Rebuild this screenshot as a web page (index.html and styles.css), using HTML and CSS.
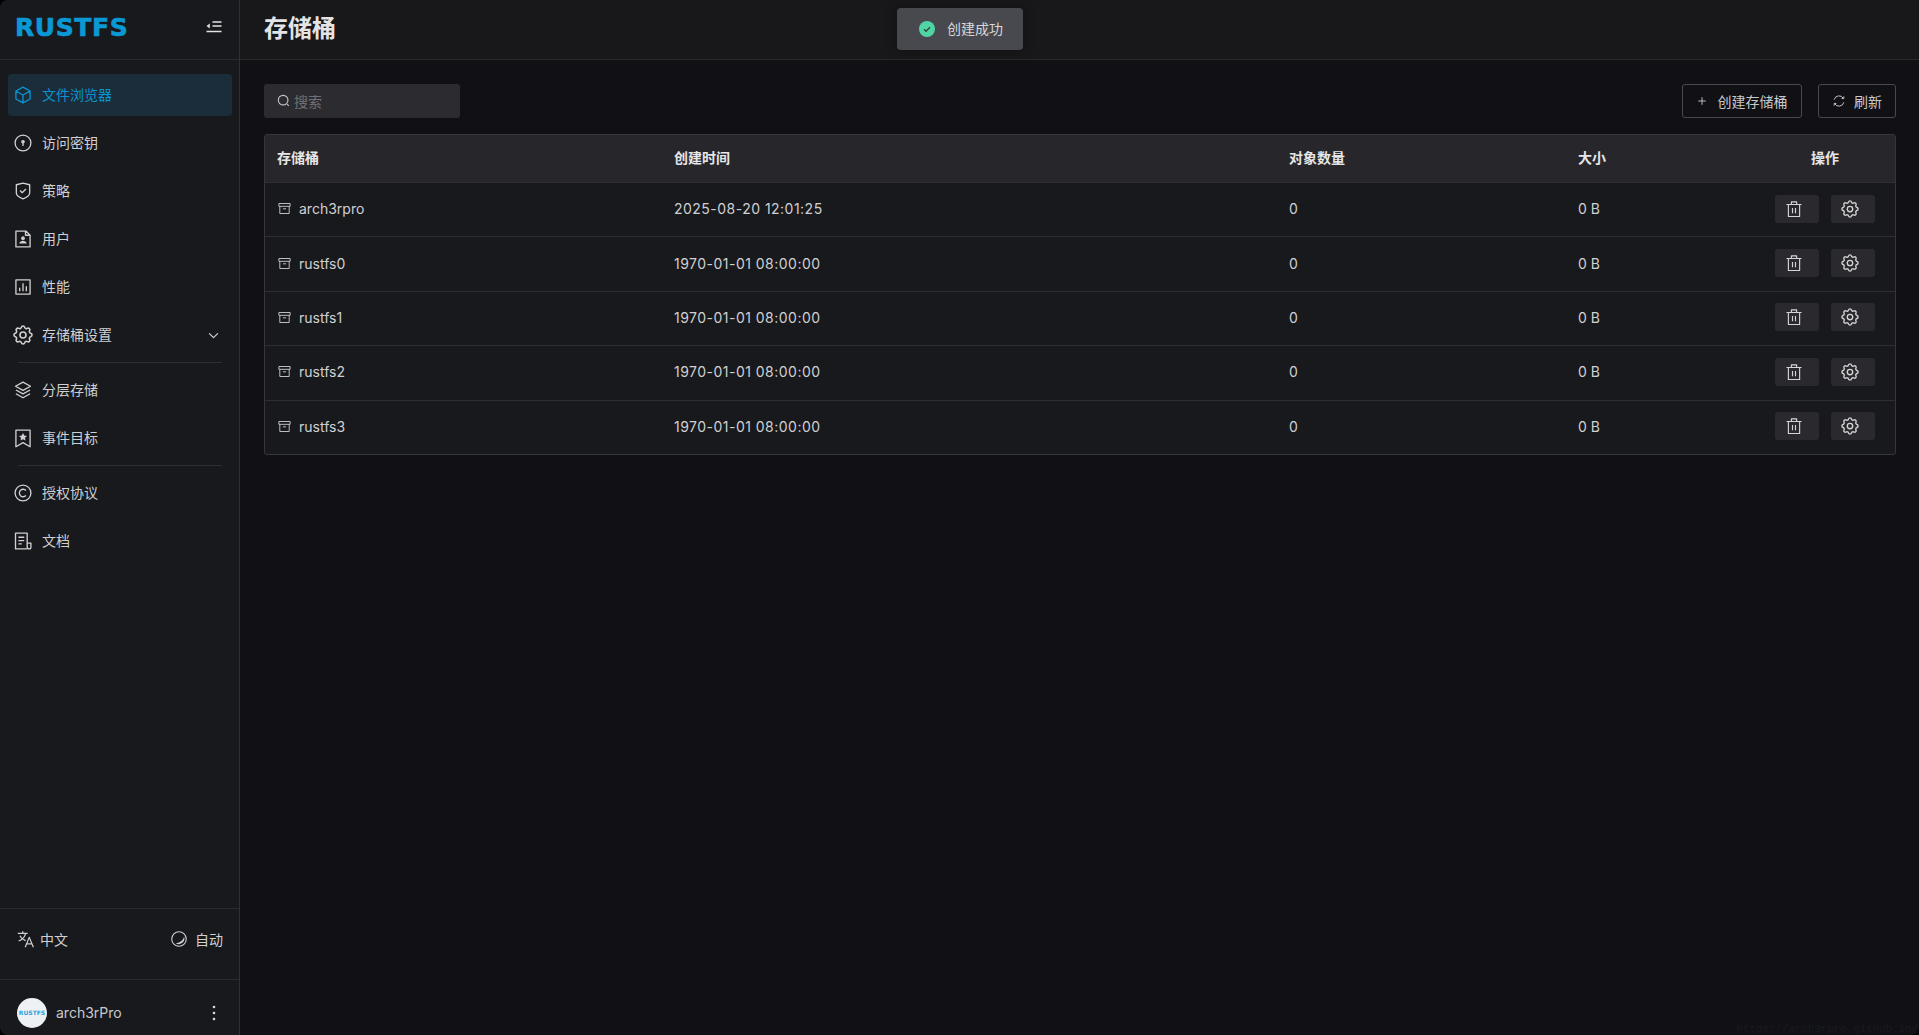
FILE: index.html
```html
<!DOCTYPE html>
<html lang="zh">
<head>
<meta charset="utf-8">
<title>RustFS</title>
<link rel="stylesheet" href="styles.css">
</head>
<body>
<svg class="defs" width="0" height="0" aria-hidden="true">
  <symbol id="i-box" viewBox="0 0 24 24"><path d="M12 2.500 20.500 7.200v9.600L12 21.500l-8.500-4.700V7.200zM4 7.500l8 4.500 8-4.500M12 12v9"/></symbol>
  <symbol id="i-key" viewBox="0 0 24 24"><circle cx="12" cy="12" r="9.500"/><circle class="fill" cx="12" cy="10.500" r="2.200"/><path d="M12 11v4.500"/></symbol>
  <symbol id="i-shield" viewBox="0 0 24 24"><path d="M12 2.500 20 4.500v10c0 2.500-4 5.500-8 7-4-1.500-8-4.500-8-7v-10zM8.500 11.500l2.500 2.500 4.500-4.500"/></symbol>
  <symbol id="i-user" viewBox="0 0 24 24"><path d="M3.500 2.500h12l5 5v14h-17zM15 2.500v5h5.500"/><circle class="fill" cx="12" cy="11" r="2.200"/><path class="fill" d="M7.500 17.500c.5-2.500 2.500-3.500 4.500-3.500s4 1 4.500 3.500z"/></symbol>
  <symbol id="i-chart" viewBox="0 0 24 24"><path d="M3.500 3.500h17v17h-17zM8 17v-4M12 17V7.500M16 17v-6"/></symbol>
  <symbol id="i-gear" viewBox="2 2 20 20"><path d="M10.325 4.317c.426-1.756 2.924-1.756 3.350 0a1.724 1.724 0 0 0 2.573 1.066c1.543-.94 3.310.826 2.370 2.370a1.724 1.724 0 0 0 1.065 2.572c1.756.426 1.756 2.924 0 3.350a1.724 1.724 0 0 0-1.066 2.573c.94 1.543-.826 3.310-2.370 2.370a1.724 1.724 0 0 0-2.572 1.065c-.426 1.756-2.924 1.756-3.350 0a1.724 1.724 0 0 0-2.573-1.066c-1.543.94-3.310-.826-2.370-2.370a1.724 1.724 0 0 0-1.065-2.572c-1.756-.426-1.756-2.924 0-3.350a1.724 1.724 0 0 0 1.066-2.573c-.94-1.543.826-3.310 2.370-2.370c1 .608 2.296.07 2.572-1.065z"/><circle cx="12" cy="12" r="3"/></symbol>
  <symbol id="i-layers" viewBox="0 0 24 24"><path d="M12 2.500 21 7.500l-9 5-9-5zM3.500 12l8.500 4.700 8.500-4.700M3.500 16.500l8.500 4.800 8.500-4.800"/></symbol>
  <symbol id="i-bookmark" viewBox="0 0 24 24"><path d="M3.500 2.500h17v20L12 17.500l-8.500 5z"/><path class="fill" d="M12 6l1.500 3.100 3.300.4-2.400 2.300.6 3.300-3-1.600-3 1.600.6-3.300-2.400-2.300 3.300-.4z"/></symbol>
  <symbol id="i-copy" viewBox="0 0 24 24"><circle cx="12" cy="12" r="9.500"/><path d="M15.500 9a4.500 4.500 0 1 0 0 6"/></symbol>
  <symbol id="i-doc" viewBox="0 0 24 24"><path d="M17 21.500H3V2.500h14v16c0 2 1.500 3 3 3s1.500-1 1.500-3v-4H17M6.500 7.500h7M6.500 11.500h7M6.500 15.500h4"/></symbol>
  <symbol id="i-archive" viewBox="0 0 24 24"><path d="M3 4h18v4.500H3zM4.500 8.500V20h15V8.500M9.500 12.500h5"/></symbol>
  <symbol id="i-trash" viewBox="0 0 24 24"><path d="M2 6h20M8.500 6V2.500h7V6M4.500 6v16h15V6M10 10.500v7M14 10.500v7"/></symbol>
</svg>
<div class="window">
  <aside class="sidebar">
    <div class="brand">
      <span class="logo">RUSTFS</span>
      <svg class="collapse" viewBox="0 0 16 14"><path class="solid" d="M3.800 2.500v5L.5 5z"/><path d="M6.500 1h9M6.500 5h9M.5 10.500h15"/></svg>
    </div>
    <nav class="nav">
      <a class="item active"><svg class="ic"><use href="#i-box"/></svg><span>文件浏览器</span></a>
      <a class="item"><svg class="ic"><use href="#i-key"/></svg><span>访问密钥</span></a>
      <a class="item"><svg class="ic"><use href="#i-shield"/></svg><span>策略</span></a>
      <a class="item"><svg class="ic"><use href="#i-user"/></svg><span>用户</span></a>
      <a class="item"><svg class="ic"><use href="#i-chart"/></svg><span>性能</span></a>
      <a class="item"><svg class="ic"><use href="#i-gear"/></svg><span>存储桶设置</span>
        <svg class="chev" viewBox="0 0 12 8"><path d="M1 1.500l5 5 5-5"/></svg></a>
      <div class="sep"></div>
      <a class="item"><svg class="ic"><use href="#i-layers"/></svg><span>分层存储</span></a>
      <a class="item"><svg class="ic"><use href="#i-bookmark"/></svg><span>事件目标</span></a>
      <div class="sep"></div>
      <a class="item"><svg class="ic"><use href="#i-copy"/></svg><span>授权协议</span></a>
      <a class="item"><svg class="ic"><use href="#i-doc"/></svg><span>文档</span></a>
    </nav>
    <div class="prefs">
      <span class="pref pref-lang">
        <svg class="pref-ic" viewBox="1 1 22 22"><path d="M2 5h12M8 2.500V5M11.500 5c-.8 4-4 7.500-8.500 9.500M4.500 8c1.500 3 4 5 7 6M11 22l5-12 5 12M12.800 18h6.500"/></svg>
        中文
      </span>
      <span class="pref pref-theme">
        <svg class="pref-ic" viewBox="1 1 22 22"><circle cx="12" cy="12" r="10"/><path class="solid" d="M19 8.500c-1 5-5 8-11.500 9.500a8 8 0 0 0 11.500-9.500z"/></svg>
        自动
      </span>
    </div>
    <div class="account">
      <span class="avatar">RUSTFS</span>
      <span class="account-name">arch3rPro</span>
      <span class="kebab"><i></i><i></i><i></i></span>
    </div>
  </aside>
  <div class="content">
    <header class="topbar"><h1>存储桶</h1></header>
    <main class="main">
      <div class="toolbar">
        <label class="search">
          <svg class="search-ic" viewBox="0 0 16 16"><circle cx="7" cy="7" r="5.500"/><path d="M11.500 11.500l2 2"/></svg>
          <span>搜索</span>
        </label>
        <div class="tool-actions">
          <button class="btn btn-create"><svg class="btn-ic" viewBox="0 0 12 12"><path d="M6 1.500v9M1.500 6h9"/></svg>创建存储桶</button>
          <button class="btn btn-refresh"><svg class="btn-ic refresh" viewBox="0 0 16 16"><path d="M2.500 6.500A5.700 5.700 0 0 1 13 5M13.500 9.500A5.700 5.700 0 0 1 3 11M11 5.200h2.500V2.700M5 10.800H2.500v2.500"/></svg>刷新</button>
        </div>
      </div>
      <div class="table">
        <div class="row head">
          <div>存储桶</div><div>创建时间</div><div>对象数量</div><div>大小</div><div class="center">操作</div>
        </div>
        <div class="row">
          <div class="name"><svg class="arch"><use href="#i-archive"/></svg>arch3rpro</div><div class="date">2025-08-20 12:01:25</div><div>0</div><div>0 B</div>
          <div class="acts"><button class="act"><svg class="act-ic"><use href="#i-trash"/></svg></button><button class="act"><svg class="act-ic"><use href="#i-gear"/></svg></button></div>
        </div>
        <div class="row">
          <div class="name"><svg class="arch"><use href="#i-archive"/></svg>rustfs0</div><div class="date">1970-01-01 08:00:00</div><div>0</div><div>0 B</div>
          <div class="acts"><button class="act"><svg class="act-ic"><use href="#i-trash"/></svg></button><button class="act"><svg class="act-ic"><use href="#i-gear"/></svg></button></div>
        </div>
        <div class="row">
          <div class="name"><svg class="arch"><use href="#i-archive"/></svg>rustfs1</div><div class="date">1970-01-01 08:00:00</div><div>0</div><div>0 B</div>
          <div class="acts"><button class="act"><svg class="act-ic"><use href="#i-trash"/></svg></button><button class="act"><svg class="act-ic"><use href="#i-gear"/></svg></button></div>
        </div>
        <div class="row">
          <div class="name"><svg class="arch"><use href="#i-archive"/></svg>rustfs2</div><div class="date">1970-01-01 08:00:00</div><div>0</div><div>0 B</div>
          <div class="acts"><button class="act"><svg class="act-ic"><use href="#i-trash"/></svg></button><button class="act"><svg class="act-ic"><use href="#i-gear"/></svg></button></div>
        </div>
        <div class="row">
          <div class="name"><svg class="arch"><use href="#i-archive"/></svg>rustfs3</div><div class="date">1970-01-01 08:00:00</div><div>0</div><div>0 B</div>
          <div class="acts"><button class="act"><svg class="act-ic"><use href="#i-trash"/></svg></button><button class="act"><svg class="act-ic"><use href="#i-gear"/></svg></button></div>
        </div>
      </div>
    </main>
  </div>
  <div class="toast">
    <svg class="toast-ic" viewBox="0 0 16 16"><circle cx="8" cy="8" r="8"/><path d="M5 8.300l2 1.900 4-4"/></svg>
    <span class="toast-text">创建成功</span>
  </div>
  <div class="watermark">https://arch3rpro.github.io/</div>
</div>
</body>
</html>
```
FILE: styles.css
```css
* { box-sizing: border-box; }
html, body { margin: 0; height: 100%; background: #000; overflow: hidden; }
body { font-family: Inter, "Noto Sans CJK SC", "Noto Sans", sans-serif; font-size: 14px; color: #d5d5d7; }
.defs { position: absolute; }
svg { fill: none; stroke: currentColor; flex: none; stroke-linejoin: round; }
.fill { fill: currentColor; stroke: none; }
.solid { fill: currentColor; stroke: none; }

.window { position: relative; display: flex; height: 1035px; border-radius: 8px 0 8px 8px; overflow: hidden; background: #111115; }

.sidebar { width: 240px; flex: none; display: flex; flex-direction: column; background: #18191d; border-right: 1px solid #2e2e33; }
.brand { height: 60px; flex: none; display: flex; align-items: center; justify-content: space-between; padding: 0 17px 0 15px; border-bottom: 1px solid #2a2a2d; }
.logo { font-family: "DejaVu Sans", sans-serif; font-weight: 700; font-size: 25px; line-height: 1; color: #0b99d6; letter-spacing: .6px; padding-bottom: 4px; -webkit-text-stroke: .6px #0b99d6; }
.collapse { width: 16px; height: 14px; color: #e2e2e4; stroke-width: 1.500; margin-bottom: 4px; }

.nav { flex: 1; padding: 14px 7px 0 8px; display: flex; flex-direction: column; }
.item { height: 42px; margin-bottom: 6px; display: flex; align-items: center; padding: 0 5px; border-radius: 4px; color: #d0d0d2; }
.item.active { background: #1b2d3b; color: #0b93cf; }
.item span { margin-left: 9px; line-height: 20px; }
.ic { width: 20px; height: 20px; stroke-width: 1.600; }
.chev { width: 11px; height: 7px; margin-left: auto; margin-right: 8px; stroke-width: 1.400; }
.sep { height: 1px; background: #2e2e33; margin: 0 10px 6px; }

.prefs { height: 71px; flex: none; display: flex; align-items: center; justify-content: space-between; padding: 0 16px 10px 17px; border-top: 1px solid #2a2a2d; }
.pref { display: flex; align-items: center; color: #d0d0d2; }
.pref-lang { gap: 5px; }
.pref-theme { gap: 8px; }
.pref-ic { width: 18px; height: 18px; stroke-width: 1.500; }
.pref-theme .pref-ic { width: 16px; height: 16px; }
.account { height: 56px; flex: none; display: flex; align-items: center; padding: 10px 24px 0 17px; border-top: 1px solid #2a2a2d; }
.avatar { width: 30px; height: 30px; border-radius: 50%; background: #eef1f4; color: #30a4dc; font-family: "DejaVu Sans", sans-serif; font-size: 6px; font-weight: 700; display: flex; align-items: center; justify-content: center; }
.account-name { margin-left: 9px; color: #c9c9cb; }
.kebab { margin-left: auto; display: flex; flex-direction: column; gap: 4px; }
.kebab i { width: 2px; height: 2px; border-radius: 50%; background: #d8d8da; box-shadow: 0 0 0 .3px #d8d8da; }

.content { flex: 1; min-width: 0; display: flex; flex-direction: column; }
.topbar { height: 60px; flex: none; display: flex; align-items: center; padding: 0 24px; background: #18181a; border-bottom: 1px solid #2a2a2d; }
.topbar h1 { margin: 0; font-size: 24px; font-weight: 700; line-height: 1; color: #e4e4e6; padding-bottom: 2px; }

.main { flex: 1; padding: 24px 23px 0 24px; }
.toolbar { display: flex; justify-content: space-between; align-items: center; height: 34px; margin-bottom: 16px; }
.search { width: 196px; height: 34px; display: flex; align-items: center; gap: 3px; padding: 0 13px; background: #2c2c30; border-radius: 3px; color: #707074; }
.search-ic { width: 14px; height: 14px; color: #c4c4c6; stroke-width: 1.300; }
.tool-actions { display: flex; gap: 16px; }
.btn { height: 34px; display: flex; align-items: center; justify-content: center; background: transparent; border: 1px solid #4a4a4e; border-radius: 3px; color: #c9c9cb; font: inherit; padding: 0 0 1px; }
.btn-create { width: 120px; gap: 11px; }
.btn-refresh { width: 78px; gap: 8px; }
.btn-ic { width: 10px; height: 10px; stroke-width: 1.100; }
.btn-ic.refresh { width: 14px; height: 14px; }

.table { border: 1px solid #37373b; border-radius: 3px; background: #18191d; }
.row { display: grid; grid-template-columns: 397px 615px 289px 189px 140px; align-items: center; height: 54.400px; padding-bottom: 2px; border-top: 1px solid #2e2e33; color: #d0d0d2; }
.row > div { padding-left: 12px; }
.row.head { height: 47px; padding-bottom: 3px; border-top: 0; background: #27272b; color: #e6e6e8; font-weight: 700; border-radius: 2px 2px 0 0; }
.row.head .center { padding: 0; text-align: center; }
.name { display: flex; align-items: center; gap: 7px; }
.date { letter-spacing: .48px; }
.arch { width: 15px; height: 15px; stroke-width: 1.500; color: #c9c9cb; }
.row > .acts { padding: 0; display: flex; justify-content: center; gap: 12px; }
.act { width: 44px; height: 28px; border: 0; border-radius: 3px; background: #2a2a2e; color: #d5d5d7; padding: 0 6px 0 0; display: flex; align-items: center; justify-content: center; }
.act-ic { width: 18px; height: 18px; stroke-width: 1.500; }

.toast { position: absolute; left: 897px; top: 8px; width: 126px; height: 42px; display: flex; align-items: center; gap: 12px; padding-left: 22px; background: #48494e; border-radius: 4px; color: #d8d8da; box-shadow: 0 0 12px rgba(0,0,0,.3); }
.toast-text { margin-bottom: 2px; }
.toast-ic { width: 16px; height: 16px; stroke: none; }
.toast-ic circle { fill: #4fd5a5; }
.toast-ic path { stroke: #33403c; stroke-width: 1.300; }

.watermark { position: absolute; right: 1px; bottom: 0; font-family: "Liberation Mono", monospace; font-size: 10.800px; line-height: 12px; color: #1a1a1e; white-space: nowrap; }
```
